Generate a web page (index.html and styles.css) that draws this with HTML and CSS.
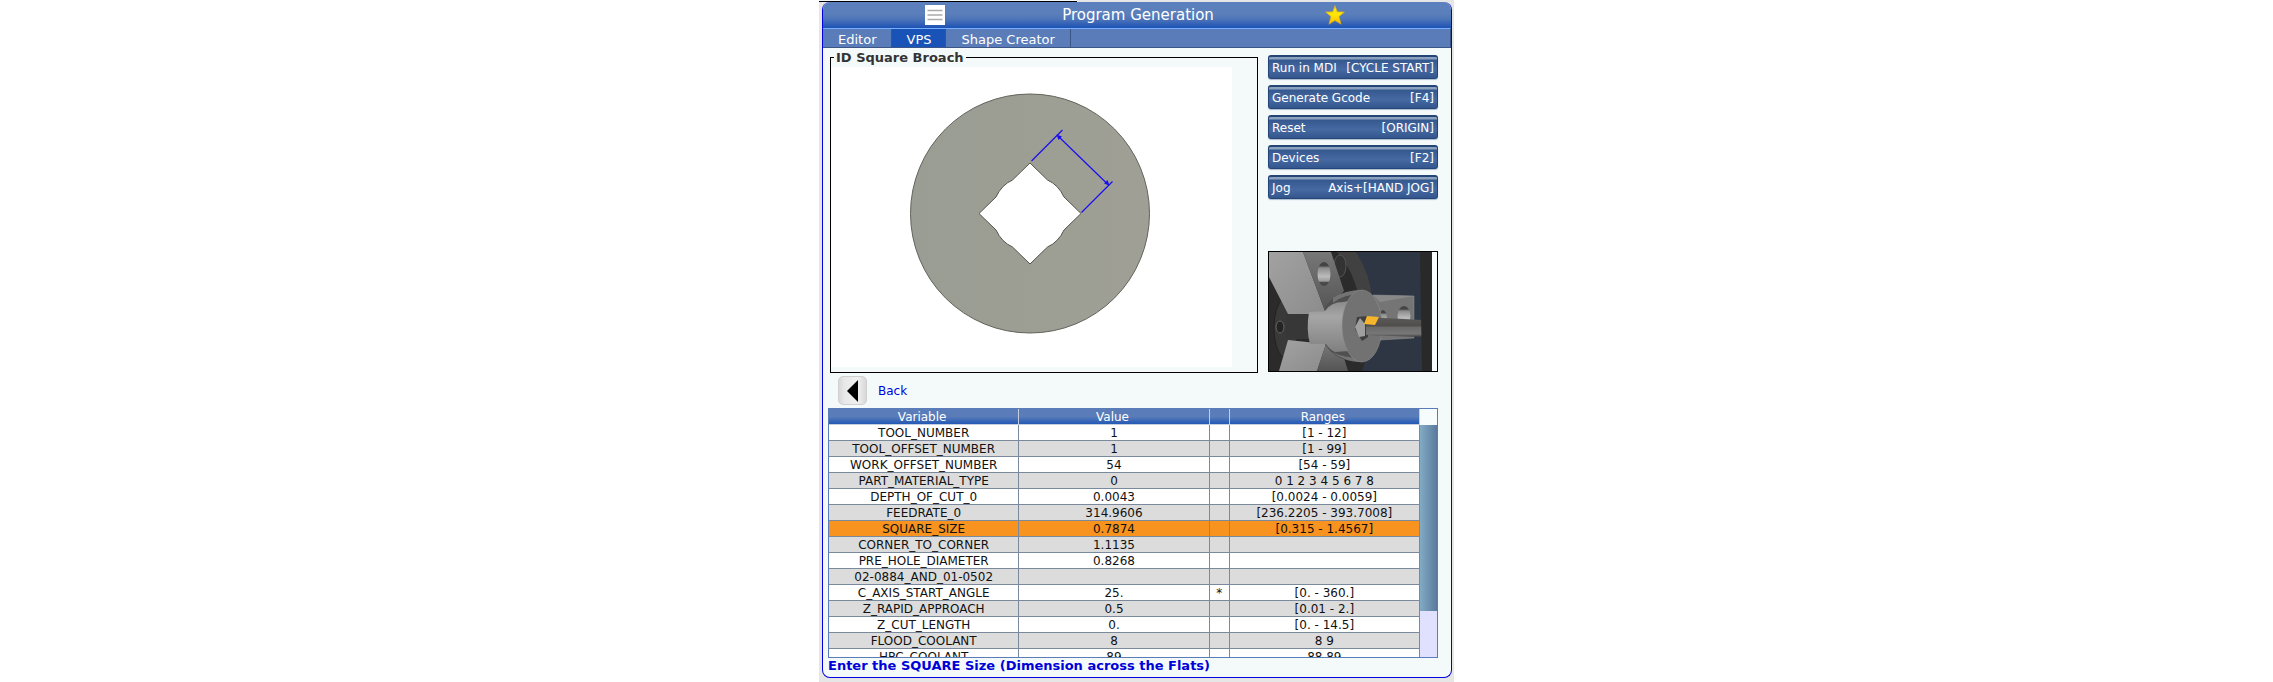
FILE: index.html
```html
<!DOCTYPE html>
<html lang="en">
<head>
<meta charset="utf-8">
<title>Program Generation</title>
<link rel="stylesheet" href="styles.css">
</head>
<body>
<main class="frame">
  <div class="edge-line"></div>
  <section class="window">
    <header class="titlebar">
      <button class="menu" aria-label="Menu"><svg width="20" height="20" viewBox="0 0 20 20"><path fill="#fff" d="M0 0h20v20H0z"/><path stroke="#aaa" stroke-width="1.3" d="M2.500 5.500h15M2.500 10h15M2.500 14.500h15"/></svg></button>
      <h1>Program Generation</h1>
      <button class="star" aria-label="Favorite"><svg width="20" height="20" viewBox="0 0 20 20"><defs><linearGradient id="gold" x2="0" y2="1"><stop offset="0" stop-color="#f6dc20"/><stop offset=".5" stop-color="#ffe600"/><stop offset="1" stop-color="#fcb900"/></linearGradient></defs><path fill="url(#gold)" stroke="#d9a51c" stroke-width=".6" d="M10 .5l2.300 6.300 7.200.2-5.400 4.400 2 7.900L10 15.500l-6.100 3.800 2-7.900L.5 7l7.200-.2z"/></svg></button>
    </header>
    <nav class="tabs">
      <button class="tab">Editor</button>
      <button class="tab active">VPS</button>
      <button class="tab">Shape Creator</button>
    </nav>
    <div class="body">
      <div class="upper">
        <fieldset class="shape">
          <legend>ID Square Broach</legend>
          <svg class="drawing" viewBox="0 0 401 300" width="401" height="300">
            <defs><linearGradient id="steel" x2="1" y2="0"><stop offset="0" stop-color="#9a9d93"/><stop offset="1" stop-color="#9f9f95"/></linearGradient></defs>
            <path fill="#fff" d="M0 0h401v300H0z"/>
            <circle cx="199" cy="146.500" r="119.500" fill="url(#steel)" stroke="#62635c"/>
            <path fill="#fff" stroke="#55564f" d="M199 96l17.500 17q11 5 16.500 17l17 16.500-17 16.500q-5.500 12-16.500 17L199 197l-17.500-17q-11-5-16.500-17l-17-16.500 17-16.500q5.500-12 16.500-17z"/>
            <g stroke="#1a10ee" stroke-width="1.200" fill="#1a10ee"><path d="M200.500 94l31-31M250.500 145.500l31-31M227 69l50 48.500"/><path stroke="none" d="M225.500 67.500l5.500 2-3.500 3.500zM278.500 118.500l-5.500-2 3.500-3.500z"/></g>
          </svg>
        </fieldset>
        <aside class="side">
          <div class="actions">
            <button class="action"><span>Run in MDI</span><span>[CYCLE START]</span></button>
            <button class="action"><span>Generate Gcode</span><span>[F4]</span></button>
            <button class="action"><span>Reset</span><span>[ORIGIN]</span></button>
            <button class="action"><span>Devices</span><span>[F2]</span></button>
            <button class="action"><span>Jog</span><span>Axis+[HAND JOG]</span></button>
          </div>
          <div class="preview">
            <svg viewBox="0 0 163 119" width="163" height="119">
              <defs>
                <linearGradient id="jaw" x2="1" y2="1"><stop offset="0" stop-color="#a2a2a2"/><stop offset="1" stop-color="#8c8c8c"/></linearGradient>
                <linearGradient id="side" x2="0" y2="1"><stop offset="0" stop-color="#777"/><stop offset="1" stop-color="#555"/></linearGradient>
                <linearGradient id="hub" x2="0" y2="1"><stop offset="0" stop-color="#8a8a8a"/><stop offset=".3" stop-color="#a6a6a6"/><stop offset="1" stop-color="#808080"/></linearGradient>
                <linearGradient id="hole" x2="0" y2="1"><stop offset=".15" stop-color="#444"/><stop offset=".25" stop-color="#8d8d8d"/><stop offset=".6" stop-color="#bbb"/><stop offset=".8" stop-color="#999"/><stop offset=".85" stop-color="#4a4a4a"/></linearGradient>
                <linearGradient id="bar" x2="0" y2="1"><stop offset="0" stop-color="#5c5b5a"/><stop offset=".45" stop-color="#4e4d4c"/><stop offset=".5" stop-color="#6b6a69"/><stop offset=".85" stop-color="#777"/><stop offset="1" stop-color="#3a3a3a"/></linearGradient>
              </defs>
              <path fill="#2e3644" d="M0 0h163v119H0z"/>
              <path fill="#2b2b2b" d="M0 0h87q16 28 16 60t-10 59H0z"/>
              <path fill="#414141" d="M68 0h19q14 22 16 46l-14-4Q84 18 68 0z"/>
              <ellipse cx="71" cy="14" rx="6" ry="11" fill="#333" stroke="#555"/>
              <ellipse cx="17" cy="76" rx="12" ry="30" fill="#393939" stroke="#222"/>
              <ellipse cx="11" cy="75" rx="4" ry="6" fill="#242424" stroke="#666"/>
              <path fill="#757575" stroke="#959595" stroke-width=".5" d="M104 43l41 1v42l-34 2z"/>
              <path fill="#888" d="M104 43l41 1-34 6z"/>
              <ellipse cx="135" cy="64" rx="6.500" ry="10" fill="url(#hole)"/>
              <ellipse cx="114" cy="67" rx="4" ry="9" fill="url(#hole)"/>
              <path fill="url(#jaw)" d="M0 0h34l22 59-16 3H19L0 25z"/>
              <path fill="url(#side)" d="M34 0h28l13 39-19 20z"/>
              <ellipse cx="55" cy="22" rx="6.500" ry="12" fill="url(#hole)"/>
              <path fill="url(#jaw)" d="M19 88l38 4-9 27H10z"/>
              <path fill="url(#side)" d="M57 92l18 14 4 13H48z"/>
              <path fill="#373737" d="M18 62h23v25H18q-3-12 0-25z"/>
              <path fill="#505050" d="M56 55q12-17 38-17v72q-28 0-38-18z"/>
              <path fill="#737373" d="M64 46q12-8 30-8v4q-20 0-30 9zM63 100q12 6 31 6v4q-18 0-31-10z"/>
              <path fill="url(#hub)" d="M40 60l16-1q6-9 18-9l6-1v50l-14 1q-6-3-9-8H41q-4-14-1-32z"/>
              <ellipse cx="93" cy="74" rx="20" ry="36" fill="#727272" stroke="#909090" stroke-width=".5"/>
              <path fill="#3f3f3f" d="M88 65l11-1v21l-6 4-7-12z"/>
              <path fill="#a0a0a0" d="M86 75l5-9 5 6v12l-6 1z"/>
              <path fill="url(#bar)" d="M97 65l56 3v17l-56-2z"/>
              <path fill="#f6b52c" d="M98 64l12 1-4 8-11-1z"/>
              <path fill="#292929" d="M151 0h12v119h-10z"/>
            </svg>
          </div>
        </aside>
      </div>
      <div class="back">
        <button class="back-button" id="back" aria-labelledby="back-label"><svg width="12" height="22" viewBox="0 0 12 22"><path d="M11 0v22L0 11z"/></svg></button>
        <label id="back-label" for="back">Back</label>
      </div>
      <div class="grid">
        <div class="rows">
          <table>
            <colgroup><col class="wide"><col class="wide"><col class="narrow"><col class="wide"></colgroup>
            <thead><tr><th>Variable</th><th>Value</th><th></th><th>Ranges</th></tr></thead>
            <tbody>
              <tr><td>TOOL_NUMBER</td><td>1</td><td></td><td>[1 - 12]</td></tr>
              <tr><td>TOOL_OFFSET_NUMBER</td><td>1</td><td></td><td>[1 - 99]</td></tr>
              <tr><td>WORK_OFFSET_NUMBER</td><td>54</td><td></td><td>[54 - 59]</td></tr>
              <tr><td>PART_MATERIAL_TYPE</td><td>0</td><td></td><td>0 1 2 3 4 5 6 7 8</td></tr>
              <tr><td>DEPTH_OF_CUT_0</td><td>0.0043</td><td></td><td>[0.0024 - 0.0059]</td></tr>
              <tr><td>FEEDRATE_0</td><td>314.9606</td><td></td><td>[236.2205 - 393.7008]</td></tr>
              <tr class="selected"><td>SQUARE_SIZE</td><td>0.7874</td><td></td><td>[0.315 - 1.4567]</td></tr>
              <tr><td>CORNER_TO_CORNER</td><td>1.1135</td><td></td><td></td></tr>
              <tr><td>PRE_HOLE_DIAMETER</td><td>0.8268</td><td></td><td></td></tr>
              <tr><td>02-0884_AND_01-0502</td><td></td><td></td><td></td></tr>
              <tr><td>C_AXIS_START_ANGLE</td><td>25.</td><td>*</td><td>[0. - 360.]</td></tr>
              <tr><td>Z_RAPID_APPROACH</td><td>0.5</td><td></td><td>[0.01 - 2.]</td></tr>
              <tr><td>Z_CUT_LENGTH</td><td>0.</td><td></td><td>[0. - 14.5]</td></tr>
              <tr><td>FLOOD_COOLANT</td><td>8</td><td></td><td>8 9</td></tr>
              <tr><td>HPC_COOLANT</td><td>89</td><td></td><td>88 89</td></tr>
            </tbody>
          </table>
        </div>
        <div class="scroll"><div class="thumb"></div></div>
      </div>
      <p class="prompt">Enter the SQUARE Size (Dimension across the Flats)</p>
    </div>
  </section>
</main>
</body>
</html>
```
FILE: styles.css
```css
* { box-sizing: border-box; }
body { margin: 0; background: #fff; font: 12px/16px "DejaVu Sans", Verdana, sans-serif; color: #111; }
button { margin: 0; padding: 0; border: 0; background: none; font: inherit; color: inherit; }
svg { display: block; }
.frame { max-width: 635px; margin: 0 auto; padding: 0 2px 5px 3px; background: #e6e6e6; }
.edge-line { height: 2px; width: 258px; margin-left: -3px; border-bottom: 1px solid #000; background: #f4fafa; }
.window { border: 1px solid #0000e0; border-top: 0; border-radius: 8px; background: #f4fafa; overflow: hidden; }
.titlebar { display: grid; grid-template-columns: 1fr auto 1fr; align-items: center; height: 26px; margin: 0 -1px; padding-left: 2px; color: #fff; background: linear-gradient(#5b80bd, #5b7fba 45%, #4f76b9 65%, #1c52b4); }
.titlebar h1 { margin: 0; font-size: 15px; line-height: 22px; font-weight: 400; }
.menu { justify-self: center; margin-left: -16px; }
.star { justify-self: center; margin-left: 4px; }
.tabs { display: flex; height: 20px; background: #5a7db9; border-top: 1px solid #76b0ff; border-bottom: 1px solid #3a5586; border-right: 1px solid #3a5586; color: #fff; }
.tab { padding: 3px 15px 0; border-right: 1px solid #3a5586; font-size: 13px; line-height: 16px; }
.tab.active { padding: 3px 14px 0; background: #1a53b8; }
.tab:last-child { min-width: 122px; }
.body { padding: 1px 13px 3px 5px; }
.upper { display: flex; gap: 10px; align-items: stretch; }
.shape { flex: 1; position: relative; margin: 0 0 0 2px; padding: 1px 0 5px; border: 1px solid #000; min-width: 0; }
.shape legend { margin-left: 3px; padding: 0 2px; font-size: 13px; line-height: 17px; font-weight: 700; color: #333; }
.drawing { max-width: 100%; }
.side { display: flex; flex-direction: column; justify-content: space-between; width: 170px; padding: 6px 0 1px; }
.actions { display: grid; gap: 6px; }
.action { display: flex; justify-content: space-between; align-items: center; height: 24px; padding: 1px 3px 0; border: 1px solid #254577; border-top-width: 2px; border-radius: 3px; color: #fff; white-space: nowrap; background: linear-gradient(#8ba2bf 2px, #35588f 3px, #4669a3 60%, #34568d); box-shadow: 0 1px 1px #a9bbcf; }
.preview { border: 1px solid #000; background: #f8fdfd; overflow: hidden; }
.back { display: flex; align-items: center; gap: 11px; margin: 3px 0 3px 10px; color: #00d; }
.back-button { display: grid; place-items: center; width: 29px; height: 29px; border: 1px solid #d0d0d0; border-radius: 5px; background: linear-gradient(90deg, #d8d8d8, #e8e8e8 20%, #f0f0f0 70%, #d8d8d8); }
.grid { display: flex; max-height: 250px; border: 1px solid #5a7db9; background: #fff; }
.rows { flex: 1; overflow: hidden; }
table { width: 100%; table-layout: fixed; border-collapse: separate; border-spacing: 0; }
.narrow { width: 20px; }
th, td { height: 16px; padding: 1px 0 0; line-height: 14px; text-align: center; white-space: nowrap; font-weight: 400; border-right: 1px solid #7a8a9c; border-bottom: 1px solid #7a8a9c; }
th { padding-right: 3px; color: #fff; border-color: #c4cede; background: linear-gradient(#5a7db9 50%, #2258b6); }
tbody tr:nth-child(even) { background: #dcdcdc; }
tbody tr.selected { background: #f7931e; }
.scroll { width: 17px; padding-top: 16px; background: linear-gradient(#f6fbfb 16px, #e0e0ff 16px); }
.thumb { height: 80%; background: linear-gradient(90deg, #82abc5, #5a7a9c); }
.prompt { margin: 0; font-size: 13px; line-height: 16px; font-weight: 700; color: #0000d8; }
```
